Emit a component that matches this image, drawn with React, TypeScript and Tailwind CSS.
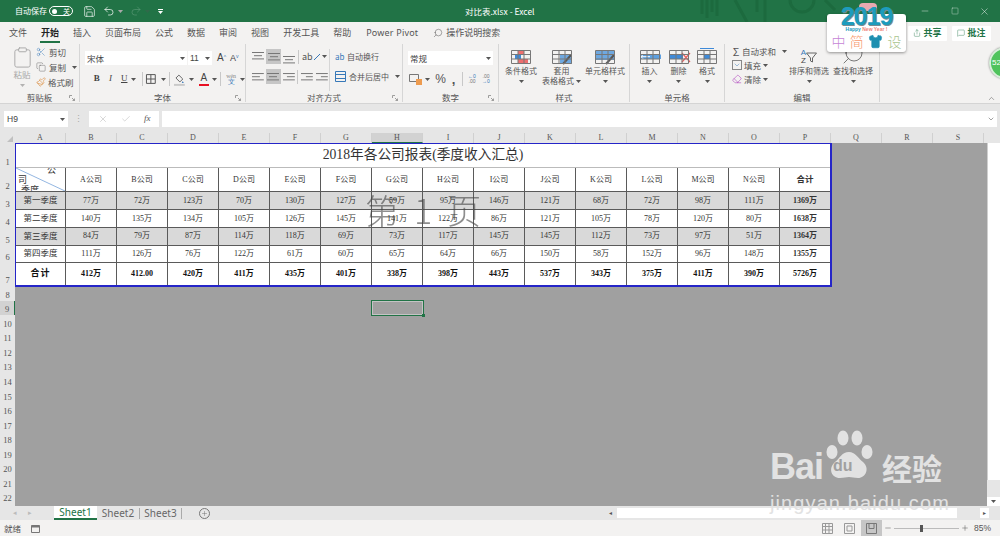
import React from "react";
import {
  Check,
  ChevronDown,
  ChevronUp,
  Clipboard,
  Copy,
  MessageSquare,
  Minus,
  Paintbrush,
  Plus,
  Redo2,
  Save,
  Scissors,
  Search,
  Shirt,
  Square,
  Undo2,
  X,
  Share,
  Eraser,
} from "lucide-react";

const tabs = ["文件", "开始", "插入", "页面布局", "公式", "数据", "审阅", "视图", "开发工具", "帮助", "Power Pivot"];
const columns = "ABCDEFGHIJKLMNOPQRS".split("");
const companies = "ABCDEFGHIJKLMN".split("");

const rows = [
  { name: "第一季度", shade: true, values: [77, 72, 123, 70, 130, 127, 59, 95, 146, 121, 68, 72, 98, 111], total: 1369 },
  { name: "第二季度", shade: false, values: [140, 135, 134, 105, 126, 145, 141, 122, 86, 121, 105, 78, 120, 80], total: 1638 },
  { name: "第三季度", shade: true, values: [84, 79, 87, 114, 118, 69, 73, 117, 145, 145, 112, 73, 97, 51], total: 1364 },
  { name: "第四季度", shade: false, values: [111, 126, 76, 122, 61, 60, 65, 64, 66, 150, 58, 152, 96, 148], total: 1355 },
];
const totals = ["412万", "412.00", "420万", "411万", "435万", "401万", "338万", "398万", "443万", "537万", "343万", "375万", "411万", "390万", "5726万"];

const rowHeads = [
  { n: 1, cls: "h-[25px]" },
  { n: 2, cls: "h-[24px]" },
  { n: 3, cls: "h-[18px]" },
  { n: 4, cls: "h-[18px]" },
  { n: 5, cls: "h-[17.5px]" },
  { n: 6, cls: "h-[17.5px]" },
  { n: 7, cls: "h-[23px]" },
];
const lowerRows = [8, 9, 10, 11, 12, 13, 14, 15, 16, 17, 18, 19, 20, 21, 22];

const Caret = ({ className = "" }: { className?: string }) => (
  <svg width="5" height="3" viewBox="0 0 5 3" className={"shrink-0 " + className}>
    <path d="M0 0h5L2.5 3z" fill="#555" />
  </svg>
);

const Sep = () => <div className="w-px h-[14px] bg-[#c8c8c8] shrink-0" />;

// 三条横线的对齐图标
const Lines = ({ w = [12, 8, 12], align = "center", y = 3 }: { w?: number[]; align?: string; y?: number }) => (
  <svg width="14" height="14" viewBox="0 0 14 14">
    {w.map((len, i) => {
      const x = align === "left" ? 1 : align === "right" ? 13 - len : 7 - len / 2;
      return <rect key={i} x={x} y={y + i * 3.2} width={len} height="1" fill="#777" />;
    })}
  </svg>
);

const GridIcon = ({ children }: { children?: React.ReactNode }) => (
  <svg width="24" height="18" viewBox="0 0 24 18">
    {children}
    <path d="M2.5 2.5h19v13h-19zM2.5 6.5h19M2.5 11h19M9 2.5v13M15 2.5v13" fill="none" stroke="#777" strokeWidth="1" />
  </svg>
);

const BigButton = ({ icon, lines, width, caretInline }: { icon: React.ReactNode; lines: string[]; width: string; caretInline?: boolean }) => (
  <div className={"flex flex-col items-center shrink-0 " + width}>
    <div className="h-[18px] flex items-center justify-center">{icon}</div>
    <div className="text-[8px] leading-[10px] text-center text-[#555] whitespace-nowrap">
      {lines.map((l, i) => (
        <div key={i} className="flex items-center justify-center gap-[2px] h-[10px]">
          {l}
          {caretInline && i === lines.length - 1 && <Caret />}
        </div>
      ))}
    </div>
    {!caretInline && (
      <div className="h-[10px] flex items-center">
        <Caret />
      </div>
    )}
  </div>
);

const Group = ({ label, width, launcher, children }: { label: string; width: string; launcher?: boolean; children: React.ReactNode }) => (
  <div className={"flex flex-col shrink-0 h-full border-r border-[#d6d6d6] relative " + width}>
    <div className="flex-1 min-h-0">{children}</div>
    <div className="h-[13px] text-[8.5px] leading-[16px] text-center text-[#555]">{label}</div>
    {launcher && (
      <svg width="6" height="6" viewBox="0 0 6 6" className="absolute right-[4px] bottom-[1px]">
        <path d="M.5 3V.5H3M3 3l2.5 2.5M3.5 5.5h2v-2" fill="none" stroke="#888" strokeWidth=".8" />
      </svg>
    )}
  </div>
);

const Cell = ({ shade, bold, children, last, wide }: { shade?: boolean; bold?: boolean; children: React.ReactNode; last?: boolean; wide?: boolean }) => (
  <div
    className={
      "flex items-center justify-center border-b border-[#5a5a5a] text-[#333] " +
      (wide ? "text-[8.5px] " : "text-[8px] ") +
      (last ? "" : "border-r ") +
      (shade ? "bg-[#d9d9d9] " : "bg-white ") +
      (bold ? "font-bold text-[#111] " : "")
    }
  >
    {children}
  </div>
);

const App: React.FC = () => {
  return (
    <div className="relative w-[1000px] h-[536px] overflow-hidden flex flex-col bg-[#f3f2f1] text-[#444] font-['Noto_Sans_CJK_SC',sans-serif]">
      {/* 标题栏 */}
      <div className="relative h-[22px] shrink-0 bg-[#217346] flex items-center text-white overflow-hidden">
        <svg width="160" height="22" viewBox="0 0 160 22" className="absolute left-[695px] top-0">
          <path d="M7 0v14M12 0v18M17 0v12M22 0v16M40 0l12 22M62 0v12M70 0v22M95 0a12 12 0 0 0 24 0M130 0l10 10" stroke="#1c6a3e" strokeWidth="3" fill="none" />
        </svg>
        <span className="ml-[15px] text-[8px] w-[34px] whitespace-nowrap">自动保存</span>
        <div className="w-[24px] h-[10px] rounded-full border border-white flex items-center justify-between px-[2px]">
          <div className="w-[5px] h-[5px] rounded-full bg-white" />
          <span className="text-[7px] leading-none">关</span>
        </div>
        <Save size={13} strokeWidth={1.2} className="ml-[10px]" />
        <Undo2 size={12} strokeWidth={1.4} className="ml-[7px]" />
        <Caret className="ml-[3px] invert" />
        <Redo2 size={12} strokeWidth={1.2} className="ml-[7px] text-[#5f9c7b]" />
        <Caret className="ml-[3px] opacity-30" />
        <svg width="5" height="5" viewBox="0 0 5 5" className="ml-[8px]">
          <path d="M0 0h5v1H0zM0 2h5L2.5 5z" fill="#fff" />
        </svg>
        <span className="absolute left-[465px] text-[8.5px] whitespace-nowrap">对比表.xlsx - Excel</span>
        <Minus size={10} strokeWidth={1} className="absolute left-[920px]" />
        <Square size={8} strokeWidth={1} className="absolute left-[951px]" />
        <X size={11} strokeWidth={1} className="absolute left-[979px]" />
      </div>

      {/* 选项卡 */}
      <div className="h-[22px] shrink-0 flex items-center pl-[9px] gap-[14px] text-[9px] text-[#555] relative">
        {tabs.map((t) =>
          t === "开始" ? (
            <div key={t} className="relative font-bold text-[#222] whitespace-nowrap">
              {t}
              <div className="absolute -left-[1px] -right-[1px] top-[15px] h-[2px] bg-[#217346]" />
            </div>
          ) : (
            <span key={t} className={"whitespace-nowrap " + (t === "Power Pivot" ? "ml-[1px] tracking-[0.2px] font-['Noto_Sans',sans-serif]" : "")}>
              {t}
            </span>
          )
        )}
        <div className="flex items-center gap-[3px] ml-[1px] whitespace-nowrap">
          <Search size={10} strokeWidth={1.2} className="-scale-x-100" />
          <span>操作说明搜索</span>
        </div>
        <div className="ml-auto mr-[9px] flex gap-[5px]">
          <div className="w-[39px] h-[15px] bg-white rounded-[1px] flex items-center justify-center gap-[2px] text-[9px] font-bold text-[#217346]">
            <Share size={8} strokeWidth={1.2} />
            共享
          </div>
          <div className="w-[39px] h-[15px] bg-white rounded-[1px] flex items-center justify-center gap-[2px] text-[9px] font-bold text-[#217346]">
            <MessageSquare size={8} strokeWidth={1.2} />
            批注
          </div>
        </div>
      </div>

      {/* 功能区 */}
      <div className="relative h-[60px] shrink-0 flex border-b border-[#d4d4d4] pb-[1px]">
        <Group label="剪贴板" width="w-[80px]" launcher>
          <div className="flex pt-[2px]">
            <div className="w-[34px] pl-[10px] flex flex-col items-center text-[#a8a8a8]">
              <Clipboard size={23} strokeWidth={1} />
              <span className="text-[8.5px] leading-[11px] whitespace-nowrap">粘贴</span>
              <Caret className="mt-[4px] opacity-40" />
            </div>
            <div className="flex flex-col gap-[3px] pl-[2px] text-[8.5px] leading-[12px] text-[#555]">
              <div className="flex items-center gap-[3px]"><Scissors size={10} strokeWidth={1.1} className="text-[#3778b8]" />剪切</div>
              <div className="flex items-center gap-[3px]"><Copy size={10} strokeWidth={1} />复制<Caret className="ml-[3px]" /></div>
              <div className="flex items-center gap-[2px]"><Paintbrush size={10} strokeWidth={1.3} className="text-[#d9822b]" />格式刷</div>
            </div>
          </div>
        </Group>

        <Group label="字体" width="w-[166px]" launcher>
          <div className="flex items-center pl-[5px] pt-[7px] gap-[1px]">
            <div className="w-[102px] h-[14px] bg-white flex items-center justify-between px-[2px] text-[8.5px]">
              宋体<Caret />
            </div>
            <div className="w-[24px] h-[14px] bg-white flex items-center justify-between px-[2px] text-[8.5px] font-['Liberation_Sans',sans-serif]">
              11<Caret />
            </div>
            <span className="ml-[4px] text-[10px] leading-none font-['Liberation_Sans',sans-serif]">A<sup className="text-[5px] text-[#3778b8]">^</sup></span>
            <span className="ml-[3px] text-[9px] leading-none font-['Liberation_Sans',sans-serif]">A<sup className="text-[5px] text-[#3778b8]">v</sup></span>
          </div>
          <div className="flex items-center pl-[10px] pt-[6px] h-[22px] text-[9px] text-[#444] font-['Liberation_Serif',serif]">
            <span className="w-[14px] text-center font-bold">B</span>
            <span className="w-[14px] text-center italic">I</span>
            <span className="w-[14px] text-center underline">U</span>
            <Caret className="mr-[6px]" />
            <Sep />
            <svg width="12" height="12" viewBox="0 0 12 12" className="mx-[2px]">
              <path d="M1.5 1.5h9v9h-9zM6 1.5v9M1.5 6h9" fill="none" stroke="#555" />
            </svg>
            <Caret className="ml-[2px] mr-[3px]" />
            <Sep />
            <svg width="13" height="13" viewBox="0 0 13 13" className="ml-[3px]">
              <path d="M6 2l4 4-3 3-4-4z" fill="none" stroke="#666" />
              <path d="M10 8l1 2h-2z" fill="#3778b8" />
              <rect x="1" y="11" width="11" height="2" fill="#c9c9c9" />
            </svg>
            <Caret className="ml-[3px] mr-[5px]" />
            <div className="relative w-[11px] h-[13px] text-center text-[10px] leading-[10px] font-['Liberation_Sans',sans-serif]">
              A
              <div className="absolute bottom-0 left-0 right-0 h-[2px] bg-[#e81123]" />
            </div>
            <Caret className="ml-[3px] mr-[3px]" />
            <Sep />
            <div className="ml-[4px] w-[12px] text-center text-[6px] leading-[6px] text-[#888]">
              wén
              <div className="text-[#3778b8] text-[7px]">文</div>
            </div>
            <Caret className="ml-[3px]" />
          </div>
        </Group>

        <Group label="对齐方式" width="w-[157px]" launcher>
          <div className="flex pt-[5px]">
            <div className="w-[84px] pl-[5px] border-r border-[#d6d6d6] h-[42px]">
              <div className="flex items-center h-[15px] gap-[1px]">
                <Lines y={2} />
                <div className="bg-[#c6c6c6] w-[15px] h-[15px] flex items-center justify-center"><Lines y={3} /></div>
                <Lines y={6} />
                <div className="ml-[1px] mr-[2px]"><Sep /></div>
                <span className="text-[9px] text-[#555]">ab</span>
                <svg width="6" height="6" viewBox="0 0 6 6"><path d="M0 6l6-6" stroke="#3778b8" /></svg>
                <Caret className="ml-[1px]" />
              </div>
              <div className="flex items-center h-[15px] gap-[1px] mt-[5px]">
                <Lines align="left" w={[12, 8, 12]} />
                <div className="bg-[#c6c6c6] w-[15px] h-[15px] flex items-center justify-center"><Lines /></div>
                <Lines align="right" w={[12, 8, 12]} />
                <div className="ml-[1px] mr-[1px]"><Sep /></div>
                <Lines w={[12, 7, 12]} align="right" />
                <Lines w={[12, 7, 12]} align="right" />
              </div>
            </div>
            <div className="pl-[5px] text-[8px] text-[#555] whitespace-nowrap">
              <div className="flex items-center gap-[2px] h-[15px]">
                <span className="text-[#3778b8] text-[8px] w-[10px]">ab</span>
                自动换行
              </div>
              <div className="flex items-center gap-[2px] h-[15px] mt-[5px]">
                <svg width="11" height="11" viewBox="0 0 11 11" className="mr-[1px]">
                  <path d="M.5.5h10v10H.5zM.5 3.5h10M.5 7.5h10" fill="none" stroke="#3778b8" />
                </svg>
                合并后居中
                <Caret className="ml-[4px]" />
              </div>
            </div>
          </div>
        </Group>

        <Group label="数字" width="w-[96px]" launcher>
          <div className="pl-[5px] pt-[7px]">
            <div className="w-[85px] h-[14px] bg-white flex items-center justify-between px-[2px] text-[8.5px]">
              常规<Caret />
            </div>
            <div className="flex items-center pt-[6px] h-[22px] text-[#555] font-['Liberation_Sans',sans-serif]">
              <svg width="14" height="12" viewBox="0 0 14 12" className="ml-[1px]">
                <path d="M.5 1.5h9v7h-9z" fill="none" stroke="#777" />
                <rect x="7" y="6" width="6" height="6" fill="#ed9b4f" />
              </svg>
              <Caret className="ml-[2px] mr-[4px]" />
              <span className="text-[12px] leading-none w-[13px] text-center">%</span>
              <span className="text-[13px] font-bold leading-none w-[13px] text-center">,</span>
              <div className="mx-[2px]"><Sep /></div>
              <div className="w-[14px] text-[5px] leading-[5px] text-center text-[#3778b8]">←0<div className="text-[#777]">.00</div></div>
              <div className="w-[14px] text-[5px] leading-[5px] text-center text-[#777]">.00<div className="text-[#3778b8]">→0</div></div>
            </div>
          </div>
        </Group>

        <Group label="样式" width="w-[131px]">
          <div className="flex pt-[4px] pl-[2px]">
            <BigButton
              width="w-[40px]"
              lines={["条件格式"]}
              icon={
                <GridIcon>
                  <rect x="9" y="2" width="6" height="5" fill="#ee6f6f" />
                  <rect x="6" y="6.5" width="6" height="4.5" fill="#3f8ad8" />
                  <rect x="9" y="11" width="10" height="5" fill="#ee6f6f" />
                </GridIcon>
              }
            />
            <BigButton
              width="w-[41px]"
              lines={["套用", "表格格式"]}
              caretInline
              icon={
                <GridIcon>
                  <rect x="10" y="7" width="12" height="9" fill="#6ea8e0" />
                  <path d="M13 16l8-9" stroke="#555" strokeWidth="2" />
                </GridIcon>
              }
            />
            <BigButton
              width="w-[46px]"
              lines={["单元格样式"]}
              icon={
                <GridIcon>
                  <rect x="3" y="3" width="18" height="9" fill="#6ea8e0" />
                  <path d="M13 16l8-9" stroke="#555" strokeWidth="2" />
                </GridIcon>
              }
            />
          </div>
        </Group>

        <Group label="单元格" width="w-[95px]">
          <div className="flex pt-[4px] pl-[5px]">
            <BigButton
              width="w-[29px]"
              lines={["插入"]}
              icon={
                <GridIcon>
                  <rect x="2" y="6.5" width="21" height="4.5" fill="#5da0e0" />
                  <path d="M12 8.7H3m3-3l-3 3 3 3" stroke="#fff" fill="none" />
                </GridIcon>
              }
            />
            <BigButton
              width="w-[29px]"
              lines={["删除"]}
              icon={
                <GridIcon>
                  <rect x="2" y="6.5" width="14" height="4.5" fill="#3f8ad8" />
                  <path d="M15 5l8 9M23 5l-8 9" stroke="#e86060" strokeWidth="1.2" />
                </GridIcon>
              }
            />
            <BigButton
              width="w-[28px]"
              lines={["格式"]}
              icon={
                <GridIcon>
                  <rect x="9" y="6.5" width="6" height="4.5" fill="#3f8ad8" />
                  <path d="M5 .5h14" stroke="#3f8ad8" />
                </GridIcon>
              }
            />
          </div>
        </Group>

        <Group label="编辑" width="w-[155px]">
          <div className="flex pl-[7px]">
            <div className="w-[55px] text-[8.5px] leading-[14px] text-[#555] whitespace-nowrap">
              <div className="flex items-center gap-[2px] h-[14px]">
                <span className="text-[11px] w-[10px] text-center">Σ</span>自动求和<Caret className="ml-[4px]" />
              </div>
              <div className="flex items-center gap-[2px] h-[14px]">
                <ChevronDown size={10} strokeWidth={1.4} className="border border-[#888] text-[#3778b8]" />填充<Caret />
              </div>
              <div className="flex items-center gap-[2px] h-[14px]">
                <Eraser size={10} strokeWidth={1.5} className="text-[#b24fc0]" />清除<Caret />
              </div>
            </div>
            <div className="flex pt-[4px]">
              <BigButton
                width="w-[44px]"
                lines={["排序和筛选"]}
                icon={
                  <div className="flex items-center">
                    <div className="text-[8px] leading-[8px] font-['Liberation_Sans',sans-serif] text-center">
                      <div className="text-[#3778b8]">A</div>
                      <div>Z</div>
                    </div>
                    <svg width="11" height="11" viewBox="0 0 11 11"><path d="M.5 1h10L6.5 6v4l-2-1V6z" fill="none" stroke="#666" /></svg>
                  </div>
                }
              />
              <BigButton
                width="w-[44px]"
                lines={["查找和选择"]}
                icon={<Search size={24} strokeWidth={0.7} className="-scale-x-100 -mt-[7px]" />}
              />
            </div>
          </div>
        </Group>
        <ChevronUp size={9} strokeWidth={1.2} className="ml-auto mr-[4px] mt-[50px]" />
      </div>

      {/* 编辑栏 */}
      <div className="h-[29px] shrink-0 bg-[#e6e6e6] flex items-start pt-[7px] pl-[4px] text-[8.5px]">
        <div className="w-[64px] h-[16px] bg-white flex items-center justify-between px-[3px] font-['Liberation_Sans',sans-serif]">
          H9<Caret />
        </div>
        <div className="w-[21px] flex justify-center pt-[3px] text-[#aaa] text-[9px] leading-[9px]">⋮</div>
        <div className="w-[70px] h-[16px] bg-white flex items-center justify-around px-[2px] text-[#aaa]">
          <X size={10} strokeWidth={1.1} />
          <Check size={10} strokeWidth={1.1} />
          <span className="italic text-[#555] text-[9px] font-['Liberation_Serif',serif]">fx</span>
        </div>
        <div className="ml-[3px] w-[835px] h-[16px] bg-white flex items-center justify-end pr-[2px]">
          <ChevronDown size={8} strokeWidth={1.5} />
        </div>
      </div>

      {/* 列标题 */}
      <div className="h-[10px] shrink-0 bg-[#e6e6e6] flex text-[8px] leading-[10px] text-[#555] font-['Liberation_Serif',serif]">
        <div className="w-[15px] relative shrink-0">
          <svg width="6" height="6" viewBox="0 0 6 6" className="absolute right-[2px] bottom-[1px]"><path d="M6 0v6H0z" fill="#c0c0c0" /></svg>
        </div>
        {columns.map((c) => (
          <div
            key={c}
            className={"w-[51px] shrink-0 text-center border-r border-[#d0d0d0] " + (c === "H" ? "bg-[#d2d2d2] border-b border-b-[#217346]" : "")}
          >
            {c}
          </div>
        ))}
      </div>

      {/* 工作表 */}
      <div className="flex flex-1 min-h-0">
        <div className="w-[15px] shrink-0 bg-[#e6e6e6] text-[8.5px] leading-[11px] text-[#555] text-center font-['Liberation_Serif',serif]">
          {rowHeads.map((r) => (
            <div key={r.n} className={"flex items-end justify-center " + r.cls}>{r.n}</div>
          ))}
          {lowerRows.map((n) => (
            <div key={n} className={"h-[14.57px] flex items-end justify-center " + (n === 9 ? "bg-[#d2d2d2] border-r border-[#217346]" : "")}>
              {n}
            </div>
          ))}
        </div>

        <div className="relative flex-1 bg-[#a0a0a0] overflow-hidden font-['Liberation_Serif','Noto_Sans_CJK_SC',serif]">
          <div className="w-fit grid grid-cols-[50px_repeat(14,51px)_50px] grid-rows-[24px_24px_18px_18px_17.5px_17.5px_22px] border-l border-t border-r-2 border-b-2 border-[#2525c8]">
            <div className="col-span-16 bg-white border-b border-[#bbb] flex items-center justify-center text-[13.7px] text-[#333]">
              2018年各公司报表(季度收入汇总)
            </div>

            <div className="relative bg-white border-r border-b border-[#5a5a5a] flex flex-col justify-center overflow-hidden text-[9px] leading-[10px] text-[#333]">
              <div className="text-right pr-[9px]">公</div>
              <div className="pl-[2px]">司</div>
              <div className="pl-[5px] whitespace-nowrap">季度</div>
              <svg className="absolute inset-0 w-full h-full" viewBox="0 0 50 24" preserveAspectRatio="none">
                <path d="M0 0L50 24" stroke="#8fb4e0" strokeWidth="1" />
              </svg>
            </div>
            {companies.map((c) => (
              <Cell key={c}>{c}公司</Cell>
            ))}
            <Cell bold last wide>合计</Cell>

            {rows.map((r) => (
              <React.Fragment key={r.name}>
                <Cell shade={r.shade} wide>{r.name}</Cell>
                {r.values.map((v, i) => (
                  <Cell key={i} shade={r.shade}>{v}万</Cell>
                ))}
                <Cell shade={r.shade} bold last>{r.total}万</Cell>
              </React.Fragment>
            ))}

            <div className="bg-white border-r border-[#5a5a5a] flex items-center justify-center text-[9px] font-bold text-[#111] tracking-[1px]">合计</div>
            {totals.map((t, i) => (
              <div
                key={i}
                className={"bg-white flex items-center justify-center text-[8px] font-bold text-[#111] " + (i === totals.length - 1 ? "" : "border-r border-[#5a5a5a]")}
              >
                {t}
              </div>
            ))}
          </div>

          {/* 分页预览水印 */}
          <div className="absolute left-[350px] top-[45px] text-[34px] leading-[44px] font-light text-[#444] opacity-60 whitespace-pre font-['Noto_Sans_CJK_SC',sans-serif] pointer-events-none">
            第  1  页
          </div>

          {/* 选中单元格 */}
          <div className="absolute left-[356px] top-[157px] w-[53px] h-[16px] border border-[#217346] shadow-[inset_0_0_0_1px_#c4c4c4]">
            <div className="absolute -right-[2px] -bottom-[2px] w-[3px] h-[3px] bg-[#217346]" />
          </div>
        </div>

        {/* 垂直滚动条 */}
        <div className="w-[13px] shrink-0 bg-[#e6e6e6] flex flex-col">
          <div className="h-[337px] bg-white border-l border-[#cfcfcf]" />
          <div className="flex-1" />
          <div className="h-[9px] bg-white flex items-center justify-center"><Caret /></div>
        </div>
      </div>

      {/* 工作表标签 */}
      <div className="h-[14px] shrink-0 bg-[#e6e6e6] flex items-center text-[10px] leading-[14px] text-[#666] font-['Noto_Sans',sans-serif] relative">
        <span className="ml-[13px] w-[15px] text-[7px] text-[#bbb]">◂</span>
        <span className="w-[26px] text-[7px] text-[#bbb]">▸</span>
        <div className="w-[43px] h-[14px] bg-white border-b-2 border-[#217346] text-[#217346] text-center leading-[12px]">Sheet1</div>
        <div className="w-[42px] text-center">Sheet2</div>
        <div className="w-px h-[11px] bg-[#aaa]" />
        <div className="w-[41px] text-center">Sheet3</div>
        <div className="w-px h-[11px] bg-[#aaa]" />
        <div className="ml-[17px] w-[11px] h-[11px] rounded-full border border-[#777] flex items-center justify-center">
          <Plus size={7} strokeWidth={1.5} />
        </div>
        <div className="ml-auto flex items-center h-[14px]">
          <span className="w-[8px] text-[6px] text-[#555]">◂</span>
          <div className="w-[340px] h-[10px] bg-white" />
          <div className="w-[23px]" />
          <span className="w-[9px] h-[10px] bg-white text-[6px] leading-[10px] text-center text-[#555]">▸</span>
          <div className="w-[11px]" />
        </div>
      </div>

      {/* 状态栏 */}
      <div className="h-[16px] shrink-0 flex items-center pl-[4px] text-[8.5px] text-[#555]">
        <span>就绪</span>
        <svg width="9" height="9" viewBox="0 0 9 9" className="ml-[10px]">
          <path d="M.5 1.5h8v7h-8z" fill="none" stroke="#777" /><path d="M.5 1.5h8v2h-8z" fill="#777" />
        </svg>
        <div className="ml-auto flex items-center h-[16px]">
          <svg width="11" height="11" viewBox="0 0 11 11" className="mr-[11px]">
            <path d="M.5.5h10v10H.5zM.5 3.5h10M.5 7h10M3.5.5v10M7 .5v10" fill="none" stroke="#999" />
          </svg>
          <svg width="11" height="11" viewBox="0 0 11 11" className="mr-[6px]">
            <path d="M.5.5h10v10H.5zM3 3h5v5H3z" fill="none" stroke="#999" />
          </svg>
          <div className="w-[21px] h-[16px] bg-[#c6c6c6] flex items-center justify-center">
            <svg width="11" height="11" viewBox="0 0 11 11">
              <path d="M.5.5h10v10H.5zM3 .5v5h5v-5" fill="none" stroke="#777" />
            </svg>
          </div>
          <Minus size={8} strokeWidth={1.5} className="ml-[2px]" />
          <div className="relative w-[65px] h-px bg-[#bbb] mx-[2px]">
            <div className="absolute left-[26px] -top-[3px] w-[3px] h-[7px] bg-[#555]" />
          </div>
          <Plus size={8} strokeWidth={1.5} />
          <span className="ml-[5px] mr-[8px] w-[18px] font-['Liberation_Sans',sans-serif]">85%</span>
        </div>
      </div>

      {/* 百度经验水印 */}
      <div className="absolute left-[770px] top-[428px] text-[#e2e2e2] pointer-events-none">
        <div className="flex items-end h-[58px]">
          <span className="text-[36px] leading-[38px] font-bold font-['Liberation_Sans',sans-serif] tracking-[-1px]">Bai</span>
          <div className="relative w-[52px] h-[58px] -ml-[1px]">
            <svg width="52" height="58" viewBox="0 0 50 58" className="absolute inset-0">
              <ellipse cx="9" cy="24" rx="5.5" ry="7" fill="currentColor" />
              <ellipse cx="20" cy="10" rx="5.5" ry="7.5" fill="currentColor" />
              <ellipse cx="34" cy="10" rx="5.5" ry="7.5" fill="currentColor" />
              <ellipse cx="44" cy="24" rx="5.5" ry="7" fill="currentColor" />
              <path d="M26 24c6 0 9 6 14 10 7 6 3 16-5 16-4 0-6-1-9-1s-5 1-9 1c-9 0-12-10-5-16 5-4 7-10 14-10z" fill="currentColor" />
            </svg>
            <span className="absolute left-[11px] top-[29px] text-[16px] leading-[18px] font-bold text-[#a0a0a0] font-['Liberation_Sans',sans-serif]">du</span>
          </div>
          <span className="ml-[8px] text-[30px] leading-[38px] font-bold whitespace-nowrap">经验</span>
        </div>
        <div className="mt-[6px] text-[20px] leading-[22px] tracking-[1.1px] whitespace-nowrap font-['Liberation_Sans',sans-serif]">jingyan.baidu.com</div>
      </div>

      {/* 顶部贴纸 */}
      <div className="absolute left-[827px] top-[14px] w-[79px] h-[38px] bg-white rounded-[3px] shadow-[0_1px_3px_rgba(0,0,0,0.4)] flex flex-col items-center pt-[12px]">
        <div className="absolute -top-[11px] left-[32px] w-[18px] h-[8px] rounded-full bg-[#e8a9b0]" />
        <div className="absolute -top-[10px] left-0 right-0 text-center text-[25px] leading-[25px] font-black text-[#1d9cbd] tracking-[-1px] font-['Liberation_Sans',sans-serif] [text-shadow:1px_1px_0_#7a8a92]">
          2019
        </div>
        <div className="text-[5px] leading-[6px] font-bold whitespace-nowrap font-['Liberation_Sans',sans-serif]">
          <span className="text-[#1d9cbd]">Happy </span>
          <span className="text-[#f0857a]">New Year !</span>
        </div>
        <div className="flex items-center justify-between w-[70px] text-[14px] leading-[17px] font-light mt-[1px]">
          <span className="text-[#c586d6]">中</span>
          <span className="text-[#f79a6e]">简</span>
          <Shirt size={15} strokeWidth={1} fill="#1d8fb0" className="text-[#1d8fb0]" />
          <span className="text-[#a9c58e]">设</span>
        </div>
      </div>

      {/* 右侧悬浮球 */}
      <div className="absolute left-[989px] top-[47px] w-[32px] h-[32px] rounded-full bg-[#4fc35c] border-2 border-[#d8eeda] shadow-[0_0_2px_rgba(0,0,0,0.5)] flex items-center pl-[1px] text-[8px] text-white font-['Liberation_Sans',sans-serif]">
        52
      </div>
    </div>
  );
};

export default App;
